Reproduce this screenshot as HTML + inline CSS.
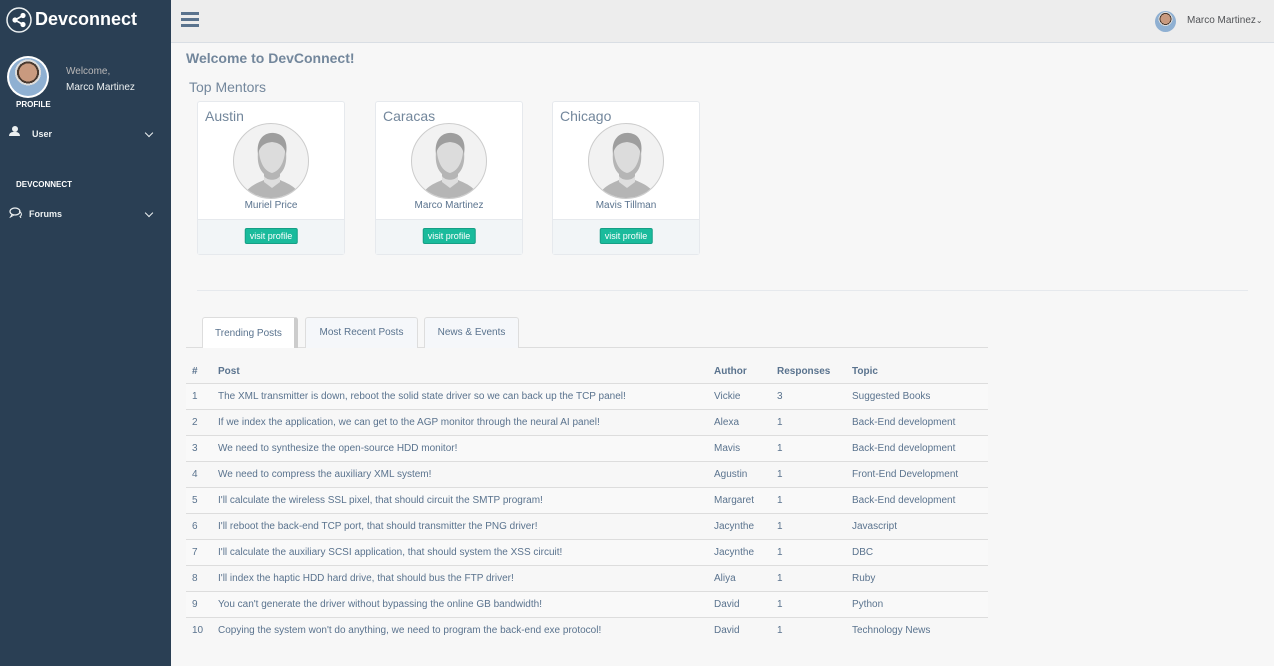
<!DOCTYPE html>
<html><head><meta charset="utf-8"><style>
*{box-sizing:border-box;margin:0;padding:0}
body{width:1274px;height:666px;overflow:hidden;background:#f7f7f7;font-family:"Liberation Sans",sans-serif;color:#73879c;position:relative}
.side{position:absolute;left:0;top:0;width:171px;height:666px;background:#2a3f54;color:#ecf0f1}
.top{position:absolute;left:171px;top:0;right:0;height:43px;background:#ededed;border-bottom:1px solid #d9dee4}
.abs{position:absolute}
.card{position:absolute;top:101px;width:148px;height:154px;background:#fff;border:1px solid #e6e9ed;border-radius:3px}
.card .city{position:absolute;left:7px;top:6px;font-size:14px;color:#73879c}
.card .av{position:absolute;left:35px;top:21px;width:76px;height:76px;border-radius:50%;background:#f2f2f2;border:1px solid #ccc;overflow:hidden}
.card .nm{position:absolute;left:0;width:100%;top:98px;text-align:center;font-size:10px;color:#5a738e}
.card .ft{position:absolute;left:0;right:0;bottom:0;height:35px;background:#f2f5f7;border-top:1px solid #e6e9ed}
.card .btn{position:absolute;left:50%;transform:translateX(-50%);top:8px;background:#1abb9c;color:#fff;font-size:9px;padding:2px 4px;border-radius:2px;border:1px solid #169f85;white-space:nowrap}
table{position:absolute;left:186px;top:360px;width:802px;border-collapse:collapse;font-size:10px;color:#5a738e;table-layout:fixed}
td,th{height:26px;padding:0 6px;text-align:left;border-top:1px solid #ddd;white-space:nowrap;overflow:hidden}
th{border-top:none;font-weight:bold;height:23px}
tbody tr:nth-child(odd){background:#f9f9f9}
.tab{position:absolute;top:317px;height:31px;font-size:10px;color:#5a738e;border:1px solid #ddd;border-bottom:none;background:#f5f7fa;text-align:center;line-height:30px;border-radius:3px 3px 0 0}
.chev{position:absolute;width:6px;height:6px;border-right:1.5px solid #ecf0f1;border-bottom:1.5px solid #ecf0f1;transform:rotate(45deg)}
</style></head><body>
<div class="side">
 <svg class="abs" style="left:6px;top:7px" width="26" height="26" viewBox="0 0 26 26"><circle cx="13" cy="13" r="12" fill="none" stroke="#ecf0f1" stroke-width="1.5"/><circle cx="9" cy="13" r="2.6" fill="#fff"/><circle cx="17" cy="8.5" r="2.6" fill="#fff"/><circle cx="17" cy="17.5" r="2.6" fill="#fff"/><path d="M9 13L17 8.5M9 13L17 17.5" stroke="#fff" stroke-width="1.6"/></svg>
 <div class="abs" style="left:35px;top:9px;font-size:18px;font-weight:bold;color:#fff">Devconnect</div>
 <div class="abs" style="left:7px;top:56px;width:42px;height:42px;border-radius:50%;background:#fff;padding:2px"><div style="width:38px;height:38px;border-radius:50%;background:radial-gradient(circle at 50% 38%,#c99a7f 0 9px,#4a3a30 9px 11px,#dcdcdc 11px 13px,#8fb0d2 13px)"></div></div>
 <div class="abs" style="left:66px;top:66px;font-size:10px;color:#bab8b8">Welcome,</div>
 <div class="abs" style="left:66px;top:82px;font-size:10px;color:#ecf0f1">Marco Martinez</div>
 <div class="abs" style="left:16px;top:100px;font-size:8px;font-weight:bold;color:#fff">PROFILE</div>
 <div class="abs" style="left:9px;top:126px;width:11px;height:10px"><div style="width:6px;height:6px;border-radius:50%;background:#ecf0f1;margin-left:2.5px"></div><div style="width:11px;height:4px;border-radius:4px 4px 0 0;background:#ecf0f1"></div></div>
 <div class="abs" style="left:32px;top:129px;font-size:9px;font-weight:bold">User</div>
 <div class="chev" style="left:146px;top:130px"></div>
 <div class="abs" style="left:16px;top:180px;font-size:8px;font-weight:bold;color:#fff">DEVCONNECT</div>
 <svg class="abs" style="left:9px;top:207px" width="14" height="11" viewBox="0 0 14 11"><ellipse cx="6" cy="4.5" rx="5" ry="3.5" fill="none" stroke="#ecf0f1" stroke-width="1.2"/><path d="M3 7.5L1.5 10L5 8" fill="none" stroke="#ecf0f1"/><path d="M10 4.5c3 1 3 4 1 5l1 1.5" fill="none" stroke="#ecf0f1"/></svg>
 <div class="abs" style="left:29px;top:209px;font-size:9px;font-weight:bold">Forums</div>
 <div class="chev" style="left:146px;top:210px"></div>
</div>
<div class="top">
 <div class="abs" style="left:10px;top:12px;width:18px"><div style="height:3px;background:#5a738e;margin-bottom:3px"></div><div style="height:3px;background:#5a738e;margin-bottom:3px"></div><div style="height:3px;background:#5a738e"></div></div>
 <div class="abs" style="left:984px;top:11px;width:21px;height:21px;border-radius:50%;background:radial-gradient(circle at 50% 38%,#c99a7f 0 5px,#4a3a30 5px 6px,#dcdcdc 6px 7px,#8fb0d2 7px)"></div>
 <div class="abs" style="left:1016px;top:15px;font-size:10px;color:#515356">Marco Martinez<span style="font-size:8px">&#8964;</span></div>
</div>
<div class="abs" style="left:186px;top:50px;font-size:14px;font-weight:bold">Welcome to DevConnect!</div>
<div class="abs" style="left:189px;top:79px;font-size:14px">Top Mentors</div>
<svg width="0" height="0" style="position:absolute"><defs><symbol id="p" viewBox="0 0 76 76"><path d="M8 76C12 62 24 59 30 56V50C25 45 23 38 24 28C24 16 30 10 38 10C46 10 52 16 52 28C53 38 51 45 46 50V56C52 59 64 62 68 76Z" fill="#b5b5b5"/><path d="M30 52C33 57 43 57 46 52V58L38 64L30 58Z" fill="#dedede"/><path d="M25 28C24 20 28 14 38 13C48 14 52 20 51 28C50 38 46 47 38 49C30 47 26 38 25 28Z" fill="#dcdcdc"/><path d="M24 30C22 16 30 8 40 9C50 10 54 18 52 30C50 22 46 19 38 18C30 19 26 22 24 30Z" fill="#9e9e9e"/></symbol></defs></svg>
<div class="card" style="left:197px"><div class="city">Austin</div><div class="av"><svg width="76" height="76"><use href="#p"/></svg></div><div class="nm">Muriel Price</div><div class="ft"><span class="btn">visit profile</span></div></div>
<div class="card" style="left:375px"><div class="city">Caracas</div><div class="av"><svg width="76" height="76"><use href="#p"/></svg></div><div class="nm">Marco Martinez</div><div class="ft"><span class="btn">visit profile</span></div></div>
<div class="card" style="left:552px"><div class="city">Chicago</div><div class="av"><svg width="76" height="76"><use href="#p"/></svg></div><div class="nm">Mavis Tillman</div><div class="ft"><span class="btn">visit profile</span></div></div>
<div class="abs" style="left:197px;top:290px;width:1051px;height:1px;background:#e6e9ed"></div>
<div class="abs" style="left:186px;top:347px;width:802px;height:1px;background:#ddd"></div>
<div class="tab" style="left:202px;width:96px;background:#fff;border-right:4px solid #ccc;line-height:32px;height:31px">Trending Posts</div>
<div class="tab" style="left:305px;width:113px">Most Recent Posts</div>
<div class="tab" style="left:424px;width:95px">News &amp; Events</div>
<table>
<colgroup><col style="width:26px"><col style="width:496px"><col style="width:63px"><col style="width:75px"><col style="width:142px"></colgroup>
<thead><tr><th>#</th><th>Post</th><th>Author</th><th>Responses</th><th>Topic</th></tr></thead>
<tbody>
<tr><td>1</td><td>The XML transmitter is down, reboot the solid state driver so we can back up the TCP panel!</td><td>Vickie</td><td>3</td><td>Suggested Books</td></tr>
<tr><td>2</td><td>If we index the application, we can get to the AGP monitor through the neural AI panel!</td><td>Alexa</td><td>1</td><td>Back-End development</td></tr>
<tr><td>3</td><td>We need to synthesize the open-source HDD monitor!</td><td>Mavis</td><td>1</td><td>Back-End development</td></tr>
<tr><td>4</td><td>We need to compress the auxiliary XML system!</td><td>Agustin</td><td>1</td><td>Front-End Development</td></tr>
<tr><td>5</td><td>I'll calculate the wireless SSL pixel, that should circuit the SMTP program!</td><td>Margaret</td><td>1</td><td>Back-End development</td></tr>
<tr><td>6</td><td>I'll reboot the back-end TCP port, that should transmitter the PNG driver!</td><td>Jacynthe</td><td>1</td><td>Javascript</td></tr>
<tr><td>7</td><td>I'll calculate the auxiliary SCSI application, that should system the XSS circuit!</td><td>Jacynthe</td><td>1</td><td>DBC</td></tr>
<tr><td>8</td><td>I'll index the haptic HDD hard drive, that should bus the FTP driver!</td><td>Aliya</td><td>1</td><td>Ruby</td></tr>
<tr><td>9</td><td>You can't generate the driver without bypassing the online GB bandwidth!</td><td>David</td><td>1</td><td>Python</td></tr>
<tr><td>10</td><td>Copying the system won't do anything, we need to program the back-end exe protocol!</td><td>David</td><td>1</td><td>Technology News</td></tr>
</tbody></table>
</body></html>
